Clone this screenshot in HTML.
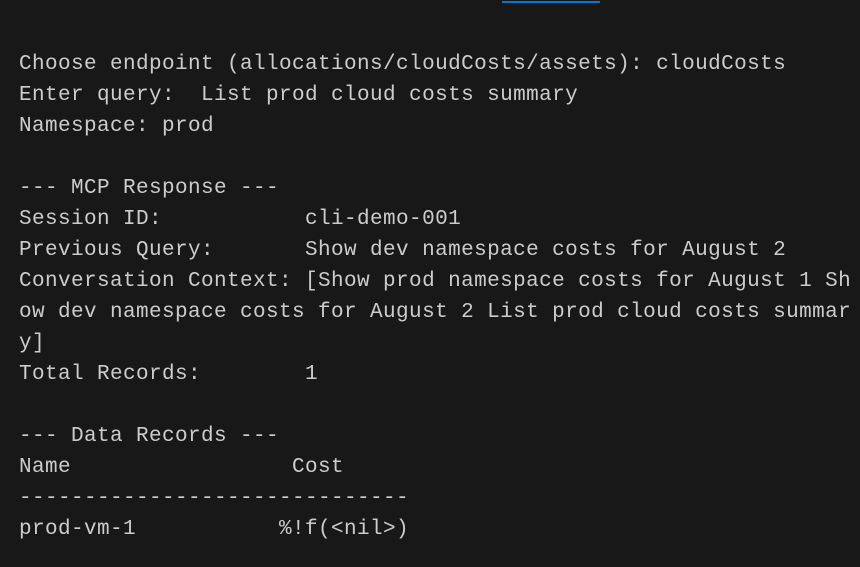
<!DOCTYPE html>
<html><head><meta charset="utf-8"><style>
html,body{margin:0;padding:0;background:#181818;width:860px;height:567px;overflow:hidden}
.bar{position:absolute;left:502px;top:1px;width:98px;height:2px;background:#0078d4}
pre{position:absolute;left:19px;top:49px;margin:0;font-family:"Liberation Mono",monospace;font-size:21px;letter-spacing:0.4px;line-height:31px;color:#cccccc;white-space:pre}
</style></head><body>
<div class="bar"></div>
<pre>Choose endpoint (allocations/cloudCosts/assets): cloudCosts
Enter query:  List prod cloud costs summary
Namespace: prod

--- MCP Response ---
Session ID:           cli-demo-001
Previous Query:       Show dev namespace costs for August 2
Conversation Context: [Show prod namespace costs for August 1 Sh
ow dev namespace costs for August 2 List prod cloud costs summar
y]
Total Records:        1

--- Data Records ---
Name                 Cost
------------------------------
prod-vm-1           %!f(&lt;nil&gt;)</pre>
</body></html>
